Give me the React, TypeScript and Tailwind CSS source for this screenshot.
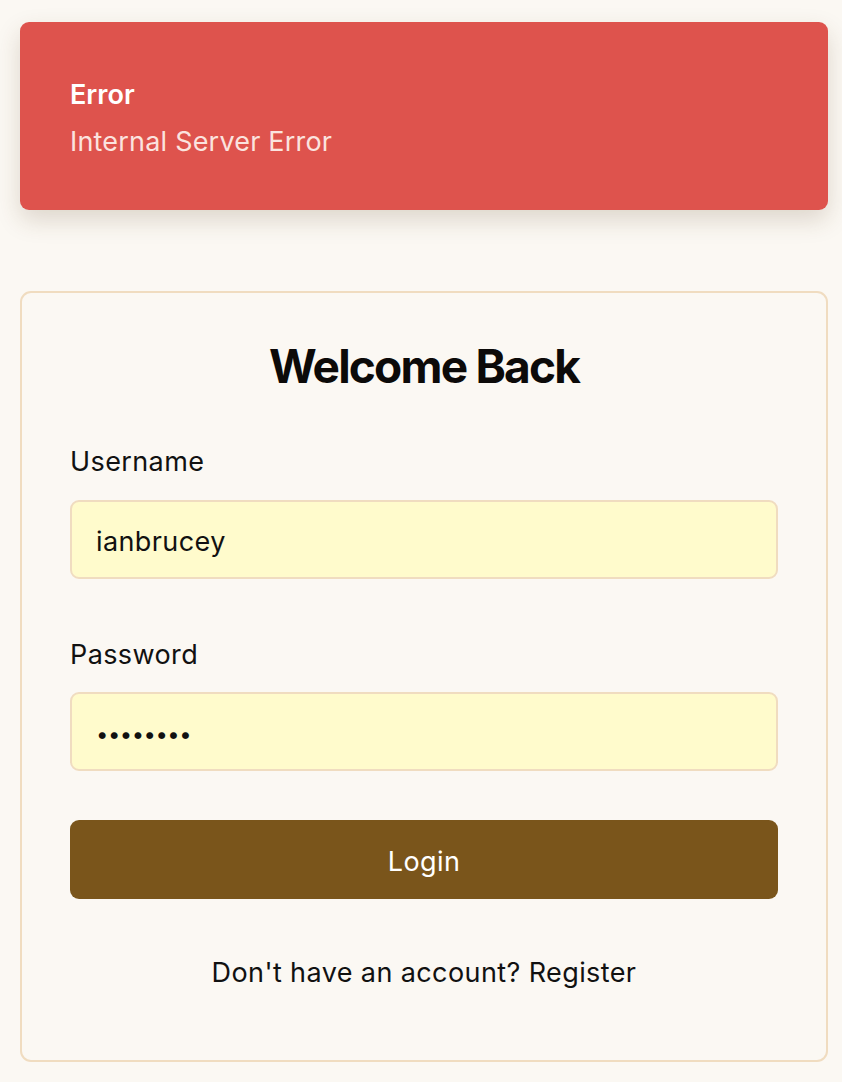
export default function App() {
  return (
    <div
      className="w-full bg-[#FBF8F3] pl-[20px] pr-[14px] pt-[22px] pb-[20px] text-[#111]"
      style={{ fontFamily: 'Inter, "Noto Sans", sans-serif' }}
    >
      <div className="rounded-[9px] bg-[#DE534D] pl-[50px] pt-[55px] pb-[50px] shadow-[0_10px_24px_rgba(90,60,30,0.18)]">
        <div className="text-[27px] leading-[36px] font-semibold text-white">Error</div>
        <div className="mt-[11px] text-[27px] leading-[36px] tracking-[0.2px] text-[#FBE3DF]">
          Internal Server Error
        </div>
      </div>

      <div className="mt-[81px] rounded-[11px] border-2 border-[#F0DCC0] bg-[#FBF8F3] px-[48px] pt-[43px] pb-[69px]">
        <h1 className="text-center text-[46px] leading-[60px] font-bold tracking-[-1.8px] text-[#0c0a09]">
          Welcome Back
        </h1>

        <label className="mt-[48px] block text-[27px] leading-[36px] tracking-[0.4px]">Username</label>
        <div className="mt-[20px] flex h-[79px] items-center rounded-[9px] border-2 border-[#F0DCC0] bg-[#FFFBCC] px-[24px] pt-[5px] text-[27px] tracking-[0.4px]">
          ianbrucey
        </div>

        <label className="mt-[58px] block text-[27px] leading-[36px] tracking-[0.4px]">Password</label>
        <div className="mt-[19px] flex h-[79px] items-center rounded-[9px] border-2 border-[#F0DCC0] bg-[#FFFBCC] px-[24px] pt-[5px] text-[22px] tracking-[-0.5px]">
          ••••••••
        </div>

        <button className="mt-[49px] flex h-[79px] w-full items-center justify-center rounded-[9px] bg-[#7A551B] pt-[5px] text-[27px] tracking-[0.4px] text-white">
          Login
        </button>

        <div className="mt-[56px] text-center text-[27px] leading-[36px] tracking-[0.4px]">
          Don't have an account? Register
        </div>
      </div>
    </div>
  );
}
